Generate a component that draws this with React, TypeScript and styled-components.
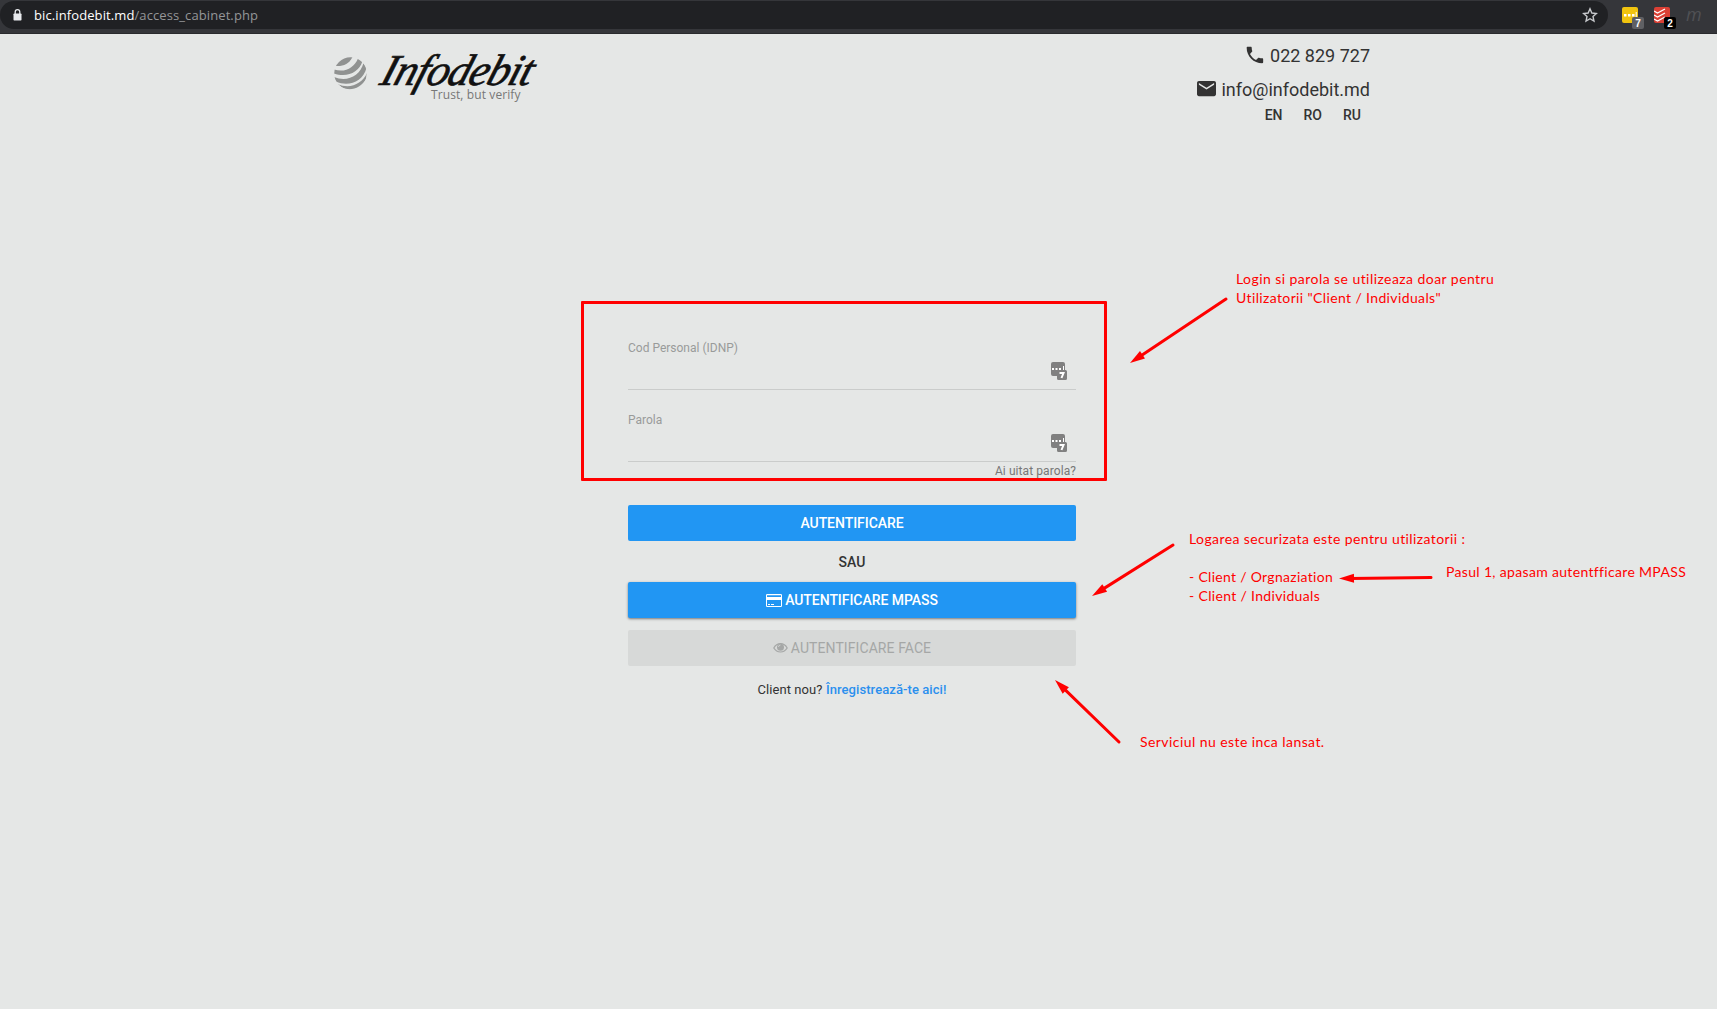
import React from "react";
import styled, { createGlobalStyle } from "styled-components";

const GlobalStyle = createGlobalStyle`
  * { box-sizing: border-box; }
  body {
    margin: 0;
    background: #e5e7e6;
    color: #333;
    font-family: Roboto, "Liberation Sans", sans-serif;
  }
`;

const Page = styled.div`
  position: relative;
  width: 1717px;
  height: 1009px;
  overflow: hidden;
  background: #e5e7e6;
`;

const BrowserBar = styled.div`
  display: flex;
  align-items: flex-start;
  height: 34px;
  padding-top: 1px;
  background: #35363a;
  border-bottom: 1px solid #292a2d;
`;

const AddressBar = styled.div`
  display: flex;
  align-items: center;
  width: 1608px;
  height: 28px;
  padding: 0 10px 0 13px;
  border-radius: 14px;
  background: #202124;
`;

const Url = styled.div`
  flex: 1;
  margin-left: 12px;
  font-family: "Open Sans", "Noto Sans", sans-serif;
  font-size: 13px;
  line-height: 18px;
  color: #949698;
  letter-spacing: 0.1px;
  white-space: nowrap;
`;

const Host = styled.span`
  color: #fff;
`;

const Extensions = styled.div`
  display: flex;
  align-items: flex-start;
  padding-left: 14px;
`;

const Extension = styled.div<{ $color: string }>`
  position: relative;
  width: 16px;
  height: 16px;
  margin: 6px 16px 0 0;
  border-radius: 2px;
  background: ${(p) => p.$color};
  svg { display: block; }
`;

const Badge = styled.span<{ $color: string }>`
  position: absolute;
  left: 10px;
  top: 10px;
  width: 12px;
  height: 12px;
  border-radius: 2px;
  background: ${(p) => p.$color};
  color: #fff;
  font: bold 10px/13px "Liberation Sans", sans-serif;
  text-align: center;
`;

const FadedMark = styled.span`
  margin: 1px 0 0 0;
  color: #505155;
  font: italic 18px/24px "Open Sans", sans-serif;
`;

const Header = styled.header`
  display: flex;
  justify-content: space-between;
  width: 1036px;
  height: 96px;
  margin-left: 334px;
`;

const Logo = styled.div`
  display: flex;
  padding-top: 23px;
`;

const Wordmark = styled.div`
  display: flex;
  flex-direction: column;
  width: 160px;
  margin: -10px 0 0 12px;
`;

const BrandName = styled.div`
  height: 40px;
  color: #111;
  font: italic 44px/48px "Liberation Serif", serif;
  letter-spacing: -1px;
  white-space: nowrap;
  -webkit-text-stroke: 0.7px #111;
  transform: skewX(-18deg);
  transform-origin: 0 36px;
`;

const Tagline = styled.div`
  margin-left: 52px;
  color: #777;
  font: 12px/16px "Open Sans", sans-serif;
  letter-spacing: 0.1px;
  white-space: nowrap;
`;

const Contacts = styled.div`
  display: flex;
  flex-direction: column;
  align-items: flex-end;
  padding-top: 4px;
`;

const ContactLine = styled.div`
  display: flex;
  align-items: center;
  gap: 5px;
  height: 34px;
  font-size: 18px;
  svg { display: block; }
`;

const Languages = styled.div`
  display: flex;
  gap: 21px;
  padding-right: 9px;
  margin-top: 1px;
  font-size: 14px;
  font-weight: 500;
  line-height: 16px;
`;

const Form = styled.form`
  position: relative;
  display: flex;
  flex-direction: column;
  width: 448px;
  margin: 208px 0 0 628px;
`;

const Field = styled.div`
  display: flex;
  align-items: flex-start;
  justify-content: space-between;
  height: 52px;
  margin-bottom: 20px;
  padding-right: 8px;
  border-bottom: 1px solid #cacccb;
`;

const Label = styled.label`
  color: #999b9a;
  font-size: 12px;
  line-height: 20px;
`;

const PasswordIcon = styled.svg`
  margin-top: 24px;
`;

const Forgot = styled.a`
  align-self: flex-end;
  margin-top: -20px;
  color: #777;
  font-size: 12px;
  line-height: 18px;
  letter-spacing: 0.08px;
`;

const Button = styled.button<{ $raised?: boolean; $off?: boolean; $gap?: number }>`
  display: flex;
  align-items: center;
  justify-content: center;
  gap: 3px;
  width: 448px;
  height: 36px;
  margin-top: ${(p) => p.$gap ?? 0}px;
  padding: 0;
  border: 0;
  border-radius: 2px;
  background: ${(p) => (p.$off ? "#d7d9d8" : "#2196f3")};
  color: ${(p) => (p.$off ? "#a5a7a6" : "#fff")};
  box-shadow: ${(p) => (p.$raised ? "0 1px 3px rgba(0,0,0,.3), 0 1px 2px rgba(0,0,0,.22)" : "none")};
  font: ${(p) => (p.$off ? 400 : 500)} 14px/20px Roboto, sans-serif;
  letter-spacing: ${(p) => (p.$off ? 0.08 : -0.05)}px;
`;

const Or = styled.div`
  height: 41px;
  color: #333;
  font-size: 14px;
  font-weight: 500;
  line-height: 42px;
  text-align: center;
`;

const SignUp = styled.p`
  margin: 14px 0 0;
  font-size: 13px;
  line-height: 20px;
  letter-spacing: 0.08px;
  text-align: center;
  a { color: #2b90ee; font-weight: 500; }
`;

const Highlight = styled.div`
  position: absolute;
  left: -47px;
  top: -37px;
  width: 526px;
  height: 180px;
  border: 3px solid #f00;
  border-radius: 1px;
`;

const Arrows = styled.svg`
  position: absolute;
  left: 0;
  top: 0;
  pointer-events: none;
`;

const Note = styled.div<{ $x: number; $y: number }>`
  position: absolute;
  left: ${(p) => p.$x}px;
  top: ${(p) => p.$y}px;
  display: flex;
  flex-direction: column;
  align-items: flex-start;
  color: #f00;
  font: 14px/19px Lato, "Open Sans", sans-serif;
`;

const NoteLine = styled.div<{ $spacing: number; $gap?: number }>`
  margin-top: ${(p) => p.$gap ?? 0}px;
  letter-spacing: ${(p) => p.$spacing}px;
  white-space: nowrap;
`;

function FieldIcon() {
  return (
    <PasswordIcon width="17" height="18" viewBox="0 0 17 18">
      <path fill="#808080" d="M2 0h10a2 2 0 0 1 2 2v6h.5A1.5 1.5 0 0 1 16 9.500v7a1.500 1.500 0 0 1-1.500 1.500h-7A1.500 1.500 0 0 1 6 16.500V14H2a2 2 0 0 1-2-2V2a2 2 0 0 1 2-2z" />
      <path fill="#fff" d="M1 6h2v2H1zM4.500 6h2v2h-2zM8 6h2v2H8zM12 4h1v4h-1z" />
      <path fill="none" stroke="#fff" strokeWidth="2" d="M8.500 11h4l-2 5" />
    </PasswordIcon>
  );
}

function Arrow({ from, to }: { from: [number, number]; to: [number, number] }) {
  const dx = to[0] - from[0];
  const dy = to[1] - from[1];
  const length = Math.hypot(dx, dy);
  const angle = (Math.atan2(dy, dx) * 180) / Math.PI;
  return (
    <g transform={`translate(${from[0]} ${from[1]}) rotate(${angle})`}>
      <line x1="0" y1="0" x2={length - 11} y2="0" stroke="#f00" strokeWidth="3" strokeLinecap="round" />
      <path fill="#f00" d={`M${length} 0l-15 -4.500v9z`} />
    </g>
  );
}

export default function App() {
  return (
    <Page>
      <GlobalStyle />
      <BrowserBar>
        <AddressBar>
          <svg width="9" height="12" viewBox="0 0 9 12">
            <path fill="none" stroke="#e8eaed" strokeWidth="1.300" d="M2.200 5V3a2.300 2.300 0 0 1 4.600 0v2" />
            <rect x="0.500" y="4.500" width="8" height="7" rx="0.700" fill="#e8eaed" />
          </svg>
          <Url><Host>bic.infodebit.md</Host>/access_cabinet.php</Url>
          <svg width="16" height="16" viewBox="0 0 16 16">
            <path fill="none" stroke="#c8cacd" strokeWidth="1.400" d="M8 1.800l1.850 4.200 4.550.45-3.400 3.050.95 4.500L8 11.700 4.050 14 5 9.500 1.600 6.450 6.150 6z" />
          </svg>
        </AddressBar>
        <Extensions>
          <Extension $color="#f1c40f">
            <svg width="16" height="16"><path fill="#fff" d="M2 7h2.500v2.500H2zM6 7h2.500v2.500H6zM10 7h2.500v2.500H10zM13.700 5h1v5h-1z" /></svg>
            <Badge $color="#5f6064">7</Badge>
          </Extension>
          <Extension $color="#db4035">
            <svg width="16" height="16"><path fill="none" stroke="#fff" strokeWidth="1.300" d="M0 4l3.500 2L11 2M0 8l3.500 2L11 6M0 12l3.500 2L11 10" /></svg>
            <Badge $color="#000">2</Badge>
          </Extension>
          <FadedMark>m</FadedMark>
        </Extensions>
      </BrowserBar>

      <Header>
        <Logo>
          <svg width="33" height="33" viewBox="0 0 33 33">
            <defs><clipPath id="globe"><circle cx="16.500" cy="16.500" r="16.300" /></clipPath></defs>
            <g clipPath="url(#globe)" fill="#909291">
              <path d="M2 9C9 9.500 15 7 18.500 0L8 -2L0 6z" />
              <path d="M0 12.500C11 16 20 11 24 1.500L28.500 4C25 15.500 13 21 0 16.500z" />
              <path d="M0 20C13 25.500 26 19 29.500 6L32.500 11C29 25 14 30 2 24.500z" />
              <path d="M3.500 27C16 32.500 28 27 33 16L32 22C27 31 17 34.500 8 30.500z" />
            </g>
          </svg>
          <Wordmark>
            <BrandName>Infodebit</BrandName>
            <Tagline>Trust, but verify</Tagline>
          </Wordmark>
        </Logo>
        <Contacts>
          <ContactLine>
            <svg width="22" height="22" viewBox="-1 0 24 24" fill="#333"><path d="M6.620 10.790c1.440 2.830 3.760 5.140 6.590 6.590l2.200-2.200c.27-.27.67-.36 1.020-.24 1.120.37 2.330.57 3.570.57.55 0 1 .45 1 1V20c0 .55-.45 1-1 1-9.390 0-17-7.610-17-17 0-.55.45-1 1-1h3.500c.55 0 1 .45 1 1 0 1.250.2 2.450.57 3.570.11.35.03.74-.25 1.020l-2.200 2.200z" /></svg>
            022 829 727
          </ContactLine>
          <ContactLine>
            <svg width="19" height="15.200" viewBox="2 4 20 16" fill="#333"><path d="M20 4H4c-1.100 0-1.990.9-1.990 2L2 18c0 1.100.9 2 2 2h16c1.100 0 2-.9 2-2V6c0-1.100-.9-2-2-2zm0 4l-8 5-8-5V6l8 5 8-5v2z" /></svg>
            info@infodebit.md
          </ContactLine>
          <Languages><span>EN</span><span>RO</span><span>RU</span></Languages>
        </Contacts>
      </Header>

      <Form>
        <Field><Label>Cod Personal (IDNP)</Label><FieldIcon /></Field>
        <Field><Label>Parola</Label><FieldIcon /></Field>
        <Forgot>Ai uitat parola?</Forgot>
        <Button type="button" $gap={25}>AUTENTIFICARE</Button>
        <Or>SAU</Or>
        <Button type="button" $raised>
          <svg width="16" height="13" viewBox="0 0 16 13"><path fill="#fff" fillRule="evenodd" d="M1.300 0h13.400A1.300 1.300 0 0 1 16 1.300v10.400a1.300 1.300 0 0 1-1.300 1.300H1.300A1.300 1.300 0 0 1 0 11.700V1.300A1.300 1.300 0 0 1 1.300 0zM1 1.300V3h14V1.300zM1 6v6h14V6zM2 10h2v1H2zm3 0h3v1H5z" /></svg>
          AUTENTIFICARE MPASS
        </Button>
        <Button type="button" $off $gap={12}>
          <svg width="15" height="12" viewBox="0 0 15 12"><path fill="none" stroke="#a5a7a6" strokeWidth="1.200" d="M.8 6C4 .2 11 .2 14.200 6 11 11.300 4 11.300.8 6z" /><circle cx="7.500" cy="5.200" r="3.500" fill="#a5a7a6" /><path fill="none" stroke="#d7d9d8" strokeWidth=".8" d="M5.500 5A2 2 0 0 1 7.500 3" /></svg>
          AUTENTIFICARE FACE
        </Button>
        <SignUp>Client nou? <a>Înregistrează-te aici!</a></SignUp>
        <Highlight />
      </Form>

      <Arrows width="1717" height="1009">
        <Arrow from={[1226, 299]} to={[1130, 363]} />
        <Arrow from={[1173, 545]} to={[1092, 596]} />
        <Arrow from={[1431, 577.500]} to={[1339, 578.500]} />
        <Arrow from={[1119, 742]} to={[1055, 680]} />
      </Arrows>
      <Note $x={1236} $y={269}>
        <NoteLine $spacing={0.44}>Login si parola se utilizeaza doar pentru</NoteLine>
        <NoteLine $spacing={0.37}>Utilizatorii "Client / Individuals"</NoteLine>
      </Note>
      <Note $x={1189} $y={529}>
        <NoteLine $spacing={0.4}>Logarea securizata este pentru utilizatorii :</NoteLine>
        <NoteLine $spacing={0.3} $gap={19}>- Client / Orgnaziation</NoteLine>
        <NoteLine $spacing={0.33}>- Client / Individuals</NoteLine>
      </Note>
      <Note $x={1446} $y={562}>
        <NoteLine $spacing={0.33}>Pasul 1, apasam autentfficare MPASS</NoteLine>
      </Note>
      <Note $x={1140} $y={732}>
        <NoteLine $spacing={0.43}>Serviciul nu este inca lansat.</NoteLine>
      </Note>
    </Page>
  );
}
